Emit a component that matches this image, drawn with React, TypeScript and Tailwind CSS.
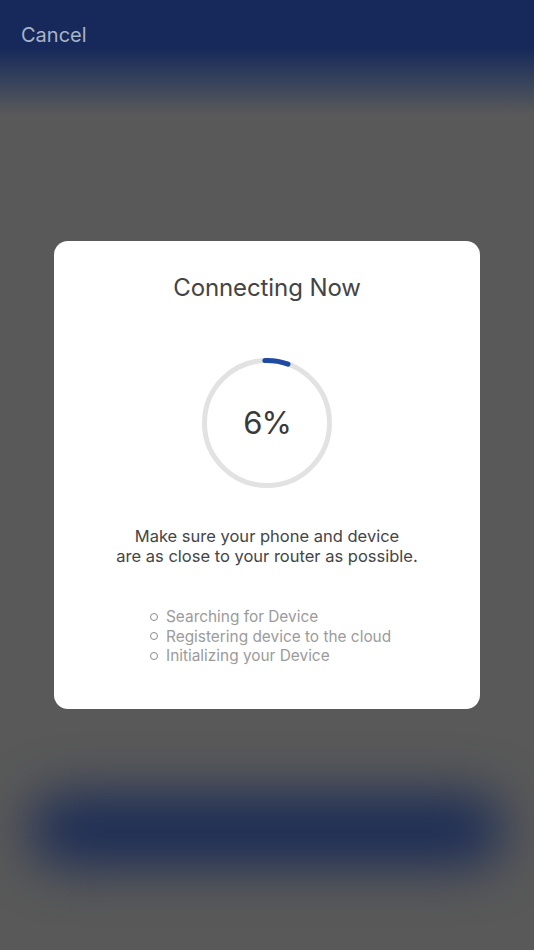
import React from "react";

export default function App() {
  const pct = 6;
  const r = 62.5;
  const c = 2 * Math.PI * r;
  return (
    <div
      className="relative w-[534px] h-[950px] overflow-hidden bg-[#595959]"
      style={{ fontFamily: "Inter, 'Noto Sans', sans-serif" }}
    >
      <div className="h-[120px] bg-gradient-to-b from-[#16295a] from-40% to-[#595959] to-95% px-[21px] pt-[22px]">
        <div className="text-[20px] text-[#a8b4c8] leading-[26px]">Cancel</div>
      </div>
      <div className="mt-[675px] px-[30px]">
        <div className="h-[70px] rounded-[35px] bg-[#1a2b55] blur-[26px]" />
      </div>

      <div className="absolute left-[54px] top-[241px] w-[426px] h-[468px] bg-white rounded-[14px] flex flex-col items-center">
        <div className="mt-[31px] text-[24px] leading-[32px] text-[#444444] tracking-[-0.1px]">Connecting Now</div>
        <div className="relative mt-[54px] w-[130px] h-[130px]">
          <svg width="130" height="130" viewBox="0 0 130 130" className="absolute inset-0">
            <circle cx="65" cy="65" r={r} fill="none" stroke="#e2e2e2" strokeWidth="5" />
            <circle
              cx="65"
              cy="65"
              r={r}
              fill="none"
              stroke="#1f4aa3"
              strokeWidth="5"
              strokeLinecap="round"
              strokeDasharray={`${(c * pct) / 100} ${c}`}
              transform="rotate(-92 65 65)"
            />
          </svg>
          <div className="absolute inset-0 flex items-center justify-center text-[31px] tracking-[-1px] text-[#3a3a3a]">{pct}%</div>
        </div>
        <div className="mt-[38px] text-center text-[16.5px] leading-[20px] text-[#454545]">
          <div>Make sure your phone and device</div>
          <div>are as close to your router as possible.</div>
        </div>
        <div className="mt-[41px] self-start ml-[96px] flex flex-col text-[15.4px] leading-[19.5px] text-[#9b9b9b]">
          {["Searching for Device", "Registering device to the cloud", "Initializing your Device"].map((t) => (
            <div key={t} className="flex items-center">
              <span className="w-[8px] h-[8px] rounded-full border-[1.5px] border-[#8a8a8a] mr-[8px]" />
              <span>{t}</span>
            </div>
          ))}
        </div>
      </div>
    </div>
  );
}
